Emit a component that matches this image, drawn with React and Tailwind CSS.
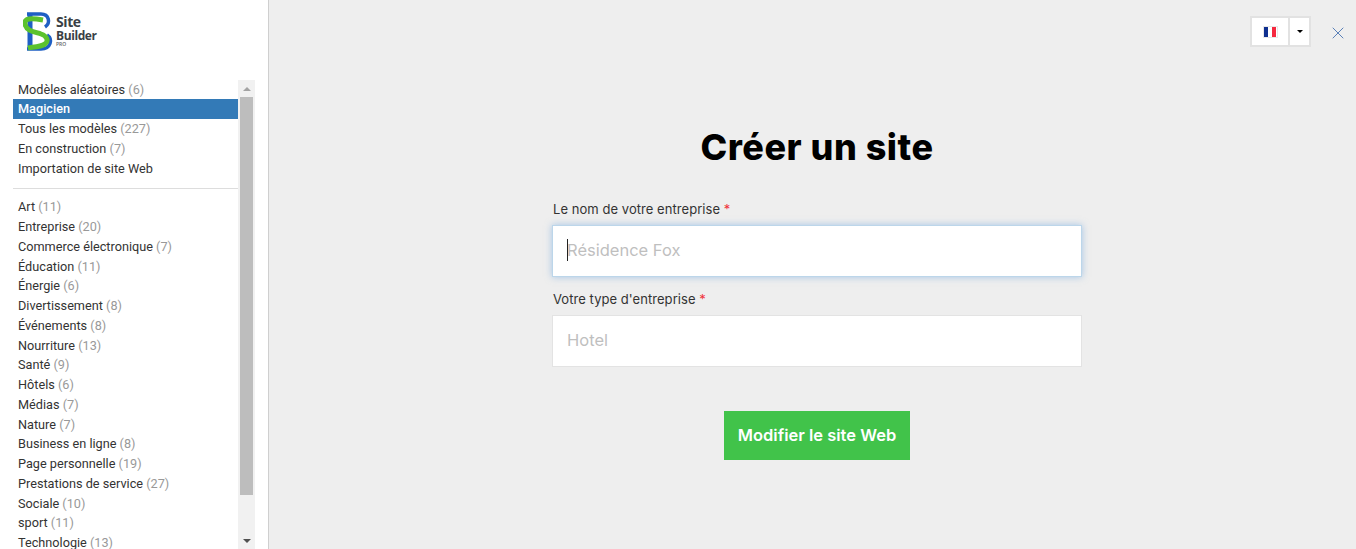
import { X } from 'lucide-react'

const topItems = [
  ['Modèles aléatoires', 6],
  ['Magicien'],
  ['Tous les modèles', 227],
  ['En construction', 7],
  ['Importation de site Web'],
]

const categories = [
  ['Art', 11],
  ['Entreprise', 20],
  ['Commerce électronique', 7],
  ['Éducation', 11],
  ['Énergie', 6],
  ['Divertissement', 8],
  ['Événements', 8],
  ['Nourriture', 13],
  ['Santé', 9],
  ['Hôtels', 6],
  ['Médias', 7],
  ['Nature', 7],
  ['Business en ligne', 8],
  ['Page personnelle', 19],
  ['Prestations de service', 27],
  ['Sociale', 10],
  ['sport', 11],
  ['Technologie', 13],
]

function Logo() {
  return (
    <div className="flex items-start ml-[23px]">
      <svg width="32" height="41" viewBox="0 0 32 41" fill="none">
        <path d="M4 3H18C26 3 28 12 22 16" stroke="#1f5fc4" strokeWidth="3.5" />
        <path d="M7 2V39" stroke="#1f5fc4" strokeWidth="5" />
        <path d="M4 38H18C28 38 30 28 24 24" stroke="#1f5fc4" strokeWidth="3.5" />
        <path d="M20 9C8 7 1 7 2 13C3 20 12 21 18 23C24 25 26 30 22 33C17 36 10 36 5 37" stroke="#5cc22e" strokeWidth="5" />
      </svg>
      <div className="ml-[1px] mt-[4px] flex flex-col font-['Open_Sans',sans-serif] font-bold text-[#3a3f45]">
        <span className="text-[14px] leading-[14px] tracking-[-0.4px]">Site</span>
        <span className="text-[12px] leading-[13px] tracking-[-0.4px]">Builder</span>
        <span className="text-[5px] leading-[5px] font-semibold text-[#666]">PRO</span>
      </div>
    </div>
  )
}

function MenuItem({ name, count, active }) {
  return (
    <div className={`h-[19.75px] leading-[19.75px] pl-[5px] text-[12.7px] whitespace-nowrap ${active ? 'bg-[#337ab7] text-white font-medium' : 'text-[#333]'}`}>
      {name}
      {count !== undefined && <span className="text-[#999]"> ({count})</span>}
    </div>
  )
}

function Scrollbar() {
  return (
    <div className="w-[17px] shrink-0 bg-[#f1f1f1] flex flex-col items-center">
      <div className="h-[17px] w-full flex items-center justify-center">
        <div className="w-0 h-0 border-x-[4px] border-x-transparent border-b-[4px] border-b-[#a3a3a3]" />
      </div>
      <div className="w-[13px] h-[398px] bg-[#bdbdbd]" />
      <div className="flex-1 w-full flex items-end justify-center pb-[6px]">
        <div className="w-0 h-0 border-x-[4px] border-x-transparent border-t-[4px] border-t-[#505050]" />
      </div>
    </div>
  )
}

function Sidebar() {
  return (
    <aside className="w-[269px] shrink-0 h-full bg-white border-r border-[#cfcfcf] font-['Roboto',sans-serif] flex flex-col">
      <div className="h-[80px] pt-[11px]">
        <Logo />
      </div>
      <div className="ml-[13px] w-[242px] h-[469px] flex overflow-hidden">
        <div className="w-[225px] shrink-0">
          <div className="pb-[9.55px] -mt-[0.3px]">
            {topItems.map(([name, count]) => (
              <MenuItem key={name} name={name} count={count} active={name === 'Magicien'} />
            ))}
          </div>
          <div className="border-t border-[#ddd] pt-[8.3px]">
            {categories.map(([name, count]) => (
              <MenuItem key={name} name={name} count={count} />
            ))}
          </div>
        </div>
        <Scrollbar />
      </div>
    </aside>
  )
}

function Field({ label, placeholder, focused }) {
  return (
    <div>
      <label className="block h-[17px] leading-[16px] ml-px text-[13px] tracking-[0.05px] text-[#333] font-['Inter',sans-serif] mb-[7px]">
        {label} <span className="text-[#f0313a]">*</span>
      </label>
      <div className={`relative h-[52px] pb-px bg-white flex items-center pl-[14px] text-[16.5px] text-[#bfbfbf] font-['Inter',sans-serif] border ${focused ? 'border-[#bcd6ea] shadow-[0_0_7px_rgba(102,160,220,0.55)]' : 'border-[#e3e3e3]'}`}>
        {focused && <span className="absolute left-[14px] top-[13px] w-px h-[22px] bg-[#222]" />}
        {placeholder}
      </div>
    </div>
  )
}

function LangSwitch() {
  return (
    <div className="flex h-[31px] w-[61px] bg-white border-2 border-[#e2e2e2]">
      <div className="w-[38px] border-r-2 border-[#e2e2e2] flex items-center justify-center">
        <div className="flex h-[12px] w-[15px] border border-[#e8e8e8]">
          <span className="flex-1 bg-[#0f2f8f]" />
          <span className="flex-1 bg-white" />
          <span className="flex-1 bg-[#f5283f]" />
        </div>
      </div>
      <div className="flex-1 flex items-center justify-center">
        <div className="w-0 h-0 border-x-[3px] border-x-transparent border-t-[3px] border-t-black" />
      </div>
    </div>
  )
}

export default function App() {
  return (
    <div className="flex h-[549px] overflow-hidden bg-[#eeeeee]">
      <Sidebar />
      <main className="relative flex-1 flex flex-col items-center pl-[9px]">
        <div className="absolute top-[16px] right-[45px]">
          <LangSwitch />
        </div>
        <X size={20} strokeWidth={1.2} className="absolute top-[23px] right-[8px] text-[#5a80b8]" />

        <h1 className="mt-[123px] h-[48px] leading-[48px] text-[36px] font-extrabold text-black font-['Inter',sans-serif] tracking-[0.5px]">Créer un site</h1>

        <div className="w-[530px] mt-[30px] flex flex-col gap-[14px]">
          <Field label="Le nom de votre entreprise" placeholder="Résidence Fox" focused />
          <Field label="Votre type d'entreprise" placeholder="Hotel" />
        </div>

        <button className="mt-[44px] w-[186px] h-[49px] pb-px bg-[#41c34a] text-white text-[16.5px] font-semibold font-['Inter',sans-serif]">
          Modifier le site Web
        </button>
      </main>
    </div>
  )
}
